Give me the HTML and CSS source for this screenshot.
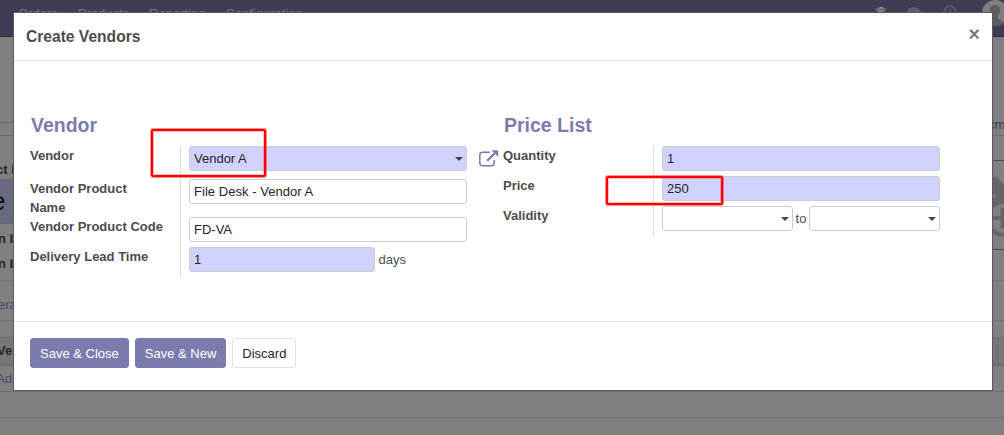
FILE: index.html
```html
<!DOCTYPE html>
<html lang="en">
<head>
<meta charset="utf-8">
<title>Create Vendors</title>
<link rel="stylesheet" href="styles.css">
</head>
<body>
<div class="page">
  <nav class="nav">
    <div class="nav-menu"><span>Orders</span><span>Products</span><span>Reporting</span><span>Configuration</span></div>
    <div class="nav-tools">
      <svg class="bug" viewBox="0 0 12 14"><path d="M3 3.500a3 3 0 0 1 6 0zM3 4.500h6V10H3z" fill="currentColor"/><path d="M1 2.500l2.500 2.500h5L11 2.500M0 8h12" fill="none" stroke="currentColor" stroke-width="1.200"/></svg>
      <svg class="chat" viewBox="0 0 16 13"><ellipse cx="6.500" cy="5" rx="6.500" ry="4.800" fill="currentColor"/><path d="M1 12l2-4 4 2zM14 3c3 3 2 6 0 7l1 2-5-2c3-1 4-4 4-7z" fill="currentColor"/></svg>
      <svg class="clock" viewBox="0 0 14 14"><circle cx="7" cy="7" r="5.800" fill="none" stroke="currentColor" stroke-width="1.800"/><path d="M7.500 3.500V8H5" fill="none" stroke="currentColor" stroke-width="1.300"/></svg>
      <svg class="avatar" viewBox="0 0 26 26"><circle cx="13" cy="13" r="13" fill="#7e7e7e"/><path d="M13 5c-4 0-5.500 3-5 6.500.4 2.500 1.500 3.500 2.500 5L10 19c-3 1-4.500 2-5.500 4a13 13 0 0 0 17 0c-1-2-2.500-3-5.500-4l-.5-2.500c1-1.500 2-2.500 2.500-5C18.500 8 17 5 13 5z" fill="#5c5c5c"/></svg>
    </div>
  </nav>
  <div class="gap-top"></div>
  <div class="status"><span>cm</span></div>
  <div class="sheet">
    <div class="sheet-left">
      <div class="product-label">ct N</div>
      <div class="product-name">e</div>
      <div class="check">n b</div>
      <div class="check">n b</div>
    </div>
    <div class="photo">
      <svg viewBox="0 0 16 88"><path d="M0 16h9l7 8v22H0V39l9-4-9-5z" fill="#656565"/><circle cx="16" cy="57.500" r="16.500" fill="#808080" stroke="#656565" stroke-width="4"/><path d="M5 57h11M14.500 46.500v21" stroke="#656565" stroke-width="4"/></svg>
    </div>
  </div>
  <div class="tabs">era</div>
  <div class="tab-gap"></div>
  <div class="table-head"><span>Ven</span><i></i></div>
  <div class="table-add">Add</div>
  <div class="table-row"></div>
</div>

<main class="modal">
  <header class="modal-head"><h1>Create Vendors</h1><span class="close">×</span></header>
  <div class="modal-body">
    <section class="group">
      <h2>Vendor</h2>
      <div class="row row-vendor">
        <label>Vendor</label>
        <div class="cell"><div class="field required select">Vendor A</div>
          <svg class="external" viewBox="0 0 20 17"><path d="M11 2.200H3.500Q.8 2.200.8 5v8Q.8 15.700 3.500 15.700h9Q15.200 15.700 15.200 13v-3" fill="none" stroke="#7c7bad" stroke-width="1.500"/><path d="M8.200 10.800l7.300-7.300" stroke="#7c7bad" stroke-width="2.300"/><path d="M12.500.2h6.700v6.700z" fill="#7c7bad"/></svg>
        </div>
      </div>
      <div class="row row-name"><label>Vendor Product<br>Name</label><div class="cell"><div class="field product">File Desk - Vendor A</div></div></div>
      <div class="row"><label>Vendor Product Code</label><div class="cell"><div class="field">FD-VA</div></div></div>
      <div class="row"><label>Delivery Lead Time</label><div class="cell"><div class="field required short">1</div><span class="days">days</span></div></div>
    </section>
    <section class="group">
      <h2>Price List</h2>
      <div class="row"><label>Quantity</label><div class="cell"><div class="field required">1</div></div></div>
      <div class="row"><label>Price</label><div class="cell"><div class="field required">250</div></div></div>
      <div class="row"><label>Validity</label><div class="cell"><div class="field date select"></div><span class="to">to</span><div class="field date select"></div></div></div>
    </section>
  </div>
  <footer class="modal-foot"><button class="btn primary">Save &amp; Close</button><button class="btn primary">Save &amp; New</button><button class="btn">Discard</button></footer>
</main>
<div class="mark mark-vendor"></div>
<div class="mark mark-price"></div>
</body>
</html>
```
FILE: styles.css
```css
* { box-sizing: border-box; }
body {
  margin: 0;
  width: 1004px;
  height: 435px;
  overflow: hidden;
  position: relative;
  font: 13px/19px "Liberation Sans", Arial, sans-serif;
  color: #4c4c4c;
}
svg { display: block; }

/* Dimmed page behind the dialog */
.page { width: 1004px; height: 435px; overflow: hidden; background: #808080; color: #262626; white-space: nowrap; }
.nav { height: 37px; display: flex; justify-content: space-between; background: #3f3d56; border-bottom: 1px solid #2e2d50; color: #77767f; overflow: hidden; }
.nav-menu { display: flex; gap: 20px; padding: 4px 0 0 18px; }
.nav-tools { display: flex; align-items: flex-start; flex: none; width: 129px; }
.nav-tools svg { flex: none; }
.bug { width: 12px; height: 14px; margin: 6px 0 0 0; color: #858585; }
.chat { width: 16px; height: 13px; margin: 7px 0 0 20px; color: #605f70; }
.clock { width: 14px; height: 14px; margin: 5px 0 0 20px; color: #605f70; }
.avatar { width: 26px; height: 26px; margin-left: 25px; }
.gap-top { height: 86px; border-bottom: 1px solid #686868; }
.status { height: 13px; border-bottom: 1px solid #6b6b6b; display: flex; justify-content: flex-end; color: #36415a; line-height: 4px; }
.status span { width: 16px; }
.sheet { height: 145px; display: flex; justify-content: space-between; border-bottom: 1px solid #747474; }
.sheet-left { width: 14px; font-weight: bold; }
.product-label { height: 43px; padding-top: 24px; margin-left: -4px; }
.product-name { height: 45px; background: #696980; color: #111; font: 26px/43px "Liberation Sans", Arial, sans-serif; margin-bottom: 5px; text-indent: -9px; border-block: 1px solid #666; }
.check { height: 25px; line-height: 20px; text-indent: -2px; }
.photo { width: 16px; height: 90px; margin-top: 24px; border-block: 1px solid #4a4a4a; }
.photo svg { width: 16px; height: 88px; }
.tabs { height: 40px; padding-top: 14px; border-bottom: 1px solid #6f6f6f; color: #4a4963; text-indent: -2px; }
.tab-gap { height: 16px; }
.table-head { height: 29px; display: flex; justify-content: space-between; background: #777; border-top: 1px solid #6e6e6e; border-bottom: 3px solid #6f6f6f; font-weight: bold; line-height: 26px; text-indent: -3px; }
.table-head i { width: 7px; border-left: 1px solid #6a6a6a; }
.table-add { height: 26px; line-height: 26px; border-bottom: 1px solid #6e6e6e; color: #4a4963; text-indent: -4px; }
.table-row { height: 26px; border-bottom: 1px solid #6e6e6e; }

/* Dialog */
.modal { position: absolute; left: 13px; top: 12px; width: 980px; height: 379px; border: 1px solid #5a5a5c; background: #fff; background-clip: padding-box; display: flex; flex-direction: column; }
.modal-head { height: 48px; display: flex; justify-content: space-between; padding: 12px 12px 0; border-bottom: 1px solid #dee2e6; }
h1 { margin: 0; font-size: 15.600px; line-height: 24px; }
.close { font-size: 19.500px; line-height: 19px; font-weight: bold; color: #7a7a7a; }
.modal-body { height: 260px; display: flex; padding: 52px 16px 0; }
.group { width: 473px; }
h2 { margin: 0; height: 33px; padding-left: 1px; font-size: 19.500px; line-height: 24px; color: #7c7bad; }
.row { height: 30px; display: flex; }
.row-vendor { height: 33px; }
.row-name { height: 38px; }
label { flex: none; width: 151px; border-right: 1px solid #ddd; font-weight: bold; }
.cell { display: flex; padding-left: 8px; }
.field { width: 278px; height: 25px; line-height: 23px; padding: 0 4px; border: 1px solid #ccc; border-radius: 3px; background: #fff; color: #212529; }
.product { letter-spacing: 0.040px; }
.required { background: #d2d2ff; }
.short { width: 186px; }
.date { width: 131px; }
.select { display: flex; justify-content: space-between; padding-right: 3px; }
.select::after { content: ""; align-self: center; margin-left: auto; border: 4px solid transparent; border-top-color: #444; border-bottom: 0; margin-top: 1px; }
.external { flex: none; width: 20px; height: 17px; margin: 4px 0 0 12px; }
.days { padding-left: 3.500px; line-height: 25px; }
.to { width: 16px; line-height: 25px; text-align: center; }
.modal-foot { flex: 1; display: flex; gap: 6px; padding: 16px; border-top: 1px solid #dee2e6; }
.btn { height: 30px; padding: 0 9px; font: inherit; color: #212529; background: #fff; border: 1px solid #dee2e6; border-radius: 3px; }
.primary { color: #fff; background: #7c7bad; border-color: #7c7bad; }

/* Highlight frames over the form */
.mark { position: absolute; border: 2px solid #f00; border-radius: 2px; box-shadow: 0 0 0 1px #ff000070, inset 0 0 0 1px #ff000040; }
.mark-vendor { left: 151px; top: 129px; width: 115px; height: 48px; }
.mark-price { left: 606px; top: 176px; width: 117px; height: 29px; }
```
